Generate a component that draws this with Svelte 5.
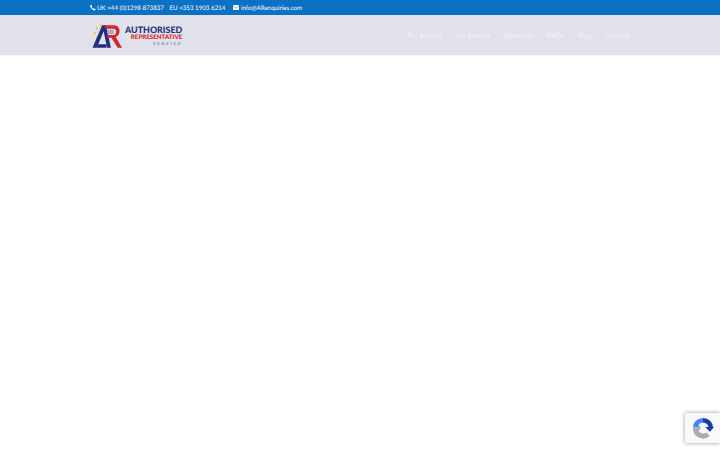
<script>
  const nav = ['EU Service', 'UK Service', 'About Us', 'FAQs', 'Blog', 'Contact'];
</script>

<div class="page">
  <div class="top-bar">
    <div class="container top-inner">
      <svg class="phone" viewBox="0 0 10 10" width="6" height="7">
        <path d="M2 0.5 L3.6 3 L2.8 4 C3.4 5.4 4.4 6.6 5.8 7.2 L7 6.2 L9.6 8 C9 9.4 8 10 7 9.8 C3.8 9.2 0.8 6 0.2 2.6 C0.1 1.8 0.8 0.8 2 0.5 Z" fill="#fff" />
      </svg>
      <span class="phones">UK +44 (0)1298 873837</span>
      <span class="eu">EU +353 1903 6214</span>
      <svg class="mail" viewBox="0 0 10 8" width="6" height="5">
        <rect width="10" height="8" rx="1" fill="#fff" />
        <path d="M0 1.5 L5 5 L10 1.5" fill="none" stroke="#0c71c3" stroke-width="0.8" />
      </svg>
      <span class="email">info@ARenquiries.com</span>
    </div>
  </div>

  <header class="header">
    <div class="container head-inner">
      <div class="logo">
        <svg viewBox="0 0 32 27" width="31" height="27">
          <circle cx="5" cy="5" r="1.2" fill="#f4c430" />
          <circle cx="9" cy="2" r="1.1" fill="#f4c430" />
          <circle cx="3" cy="10" r="1.2" fill="#f4c430" />
          <circle cx="6.5" cy="15" r="2.2" fill="#f4c430" />
          <path d="M0.5 25 L10.5 2 L14.5 2 L19.5 25 L15.5 25 L12 8 L5 25 Z" fill="#232f7e" />
          <path d="M6 21.5 H15 V25 H5 Z" fill="#232f7e" />
          <path d="M13 2 H23 C29.5 2 30.5 12 24.5 14 L31 25 H26.5 L20 14.8 H16 L15.5 12 H22 C26 12 26 5.5 22 5.5 H14 Z" fill="#d32630" />
          <rect x="15.5" y="6.5" width="7" height="4.5" rx="1" fill="#a9a4c8" />
        </svg>
        <div class="logo-text">
          <div class="l1">AUTHORISED</div>
          <div class="l2">REPRESENTATIVE</div>
          <div class="l3">SERVICE</div>
        </div>
      </div>
      <nav class="nav">
        {#each nav as item}
          <a href="#top">{item}</a>
        {/each}
      </nav>
    </div>
  </header>

  <div class="recaptcha">
    <svg viewBox="0 0 24 24" width="22" height="22">
      <path d="M12 1 A11 11 0 0 1 23 12 L18 12 A6 6 0 0 0 12 6 Z" fill="#1c3aa9" />
      <path d="M1 12 A11 11 0 0 1 12 1 L12 6 A6 6 0 0 0 6.8 9 L9.5 11.5 H1 Z" fill="#4285f4" />
      <path d="M1 12 H10 L7 15 A6 6 0 0 0 15.5 17 L19.5 20.5 A11 11 0 0 1 1 12 Z" fill="#ababab" />
      <path d="M14.5 11 H24 L19.5 16 Z" fill="#1c3aa9" />
    </svg>
  </div>
</div>

<style>
  :global(body) {
    margin: 0;
    background: #fff;
  }
  .page {
    position: relative;
    height: 450px;
    overflow: hidden;
    font-family: "Lato", "Open Sans", sans-serif;
    text-rendering: geometricPrecision;
  }
  .container {
    width: 540px;
    margin: 0 auto;
  }
  .top-bar {
    height: 15px;
    background: #0c71c3;
    color: #fff;
    font-size: 6.2px;
  }
  .top-inner {
    display: flex;
    align-items: center;
    height: 15px;
  }
  .top-inner span {
    padding-top: 1px;
  }
  .phones {
    margin-left: 1px;
  }
  .eu {
    margin-left: 5.5px;
  }
  .mail {
    margin-left: 8px;
    margin-right: 1.5px;
  }
  .header {
    height: 40px;
    background: #e1e1e9;
    box-shadow: 0 1px 0 rgba(0, 0, 50, 0.04);
  }
  .head-inner {
    display: flex;
    align-items: center;
    justify-content: space-between;
    height: 40px;
  }
  .logo {
    display: flex;
    align-items: center;
    gap: 2px;
    margin-left: 2px;
    margin-top: 3px;
  }
  .logo-text {
    display: flex;
    flex-direction: column;
    align-items: flex-end;
    font-weight: 900;
    margin-top: -1px;
  }
  .l1 {
    color: #232f7e;
    font-size: 8.9px;
    line-height: 8px;
  }
  .l2 {
    color: #d32630;
    font-size: 6.2px;
    line-height: 7px;
  }
  .l3 {
    color: #7b7f9a;
    font-size: 3.8px;
    line-height: 5px;
    letter-spacing: 2px;
  }
  .nav {
    display: flex;
    gap: 13.5px;
  }
  .nav a {
    color: #f3f3f6;
    font-size: 7.2px;
    text-decoration: none;
  }
  .recaptcha {
    position: absolute;
    left: 685px;
    top: 413px;
    width: 35px;
    height: 30px;
    background: #f9f9f9;
    box-shadow: 0 0 4px rgba(0, 0, 0, 0.4);
    display: flex;
    align-items: center;
    justify-content: center;
    border-radius: 2px 0 0 2px;
  }
</style>
